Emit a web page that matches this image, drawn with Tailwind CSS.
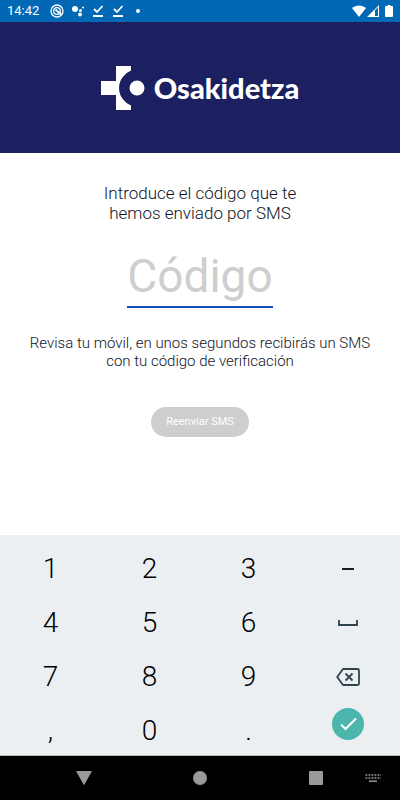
<!DOCTYPE html>
<html lang="es">
<head>
    <meta charset="UTF-8">
    <meta name="viewport" content="width=device-width, initial-scale=1.0">
    <title>Osakidetza - Código SMS</title>
    <script src="https://cdn.jsdelivr.net/npm/@tailwindcss/browser@4"></script>
</head>
<body class="min-h-screen flex flex-col bg-white font-['Roboto',sans-serif] text-[#10141e]">
    <!-- Status bar -->
    <div class="flex items-center h-[22px] px-[7px] bg-[#0068b5] text-white">
        <span class="text-[13px] leading-[22px]">14:42</span>
        <svg class="w-[14px] h-[14px] ml-[11px]" viewBox="0 0 14 14" fill="none" stroke="currentColor">
            <circle cx="7" cy="7" r="6" stroke-width="1.300"/>
            <circle cx="7" cy="7" r="3.300" stroke-width="1.300"/>
            <path d="M5.500 5.500L11 10.500" stroke-width="1.800"/>
        </svg>
        <svg class="w-3 h-3 ml-2" viewBox="0 0 12 12" fill="currentColor">
            <circle cx="3" cy="4" r="3"/>
            <circle cx="8.500" cy="5.500" r="1.500"/>
            <circle cx="11" cy="2.500" r="1"/>
            <circle cx="8" cy="9.500" r="2"/>
        </svg>
        <svg class="w-3 h-3 ml-2" viewBox="0 0 12 12" fill="none" stroke="currentColor" stroke-width="1.800">
            <path d="M2 4L5 7L10.500 1M1 11h10"/>
        </svg>
        <svg class="w-3 h-3 ml-2" viewBox="0 0 12 12" fill="none" stroke="currentColor" stroke-width="1.800">
            <path d="M2 4L5 7L10.500 1M1 11h10"/>
        </svg>
        <span class="w-1 h-1 ml-3 rounded-full bg-white"></span>
        <svg class="w-[14px] h-3 ml-auto" viewBox="0 0 14 12" fill="currentColor">
            <path d="M7 12L0 3C4 -.5 10 -.5 14 3z"/>
        </svg>
        <svg class="w-3 h-3 ml-[1px]" viewBox="0 0 12 12" fill="currentColor">
            <path fill-rule="evenodd" d="M12 0V12H0zM8 5.200V11h3V2.200z"/>
        </svg>
        <svg class="w-2 h-3 ml-[6px]" viewBox="0 0 8 12" fill="currentColor">
            <path d="M2.500 0h3v1H7a1 1 0 0 1 1 1v9a1 1 0 0 1-1 1H1a1 1 0 0 1-1-1V2a1 1 0 0 1 1-1h1.500z"/>
        </svg>
    </div>

    <header class="flex items-center justify-center gap-2 h-[131px] bg-[#1c1f60] text-white">
        <svg class="w-[45px] h-11" viewBox="0 0 45 44" fill="currentColor">
            <path d="M15 0H30V4.500A18.800 18.800 0 0 0 30 39.500V44H15V29H0V15H15z"/>
            <circle cx="36" cy="22" r="7.500"/>
        </svg>
        <span class="font-['Lato',sans-serif] font-black text-[29px] leading-8">Osakidetza</span>
    </header>

    <main class="flex-1 flex flex-col items-center px-5 pt-[30px] text-center">
        <label for="codigo" class="font-[350] text-[17px] leading-5">Introduce el código que te<br>hemos enviado por SMS</label>
        <input type="text" id="codigo" name="codigo" inputmode="numeric" placeholder="Código" class="w-[146px] h-[60px] mt-[25px] pb-[2px] border-b-2 border-[#1450b8] text-center text-[46px] placeholder:text-[#cecece] focus:outline-none">
        <p class="mt-[26px] font-[350] text-[15px] leading-[18px]">Revisa tu móvil, en unos segundos recibirás un SMS<br>con tu código de verificación</p>
        <button type="button" class="mt-[37px] px-[15px] h-[30px] rounded-full bg-[#cecece] text-white text-[11px]">Reenviar SMS</button>
    </main>

    <!-- Numeric keyboard -->
    <div class="grid grid-cols-4 auto-rows-[54px] h-[221px] pt-[7px] pl-[1px] pr-[3px] bg-[#ebeff2] border-b border-[#b5babd] text-[28px] leading-[54px] font-[350] text-black">
        <button type="button">1</button>
        <button type="button">2</button>
        <button type="button">3</button>
        <button type="button" aria-label="Guion" class="flex items-center justify-center">
            <svg class="w-3 h-[2px]" viewBox="0 0 12 2"><path d="M0 0h12v2H0z" fill="#171c20"/></svg>
        </button>
        <button type="button">4</button>
        <button type="button">5</button>
        <button type="button">6</button>
        <button type="button" aria-label="Espacio" class="flex items-center justify-center">
            <svg class="w-5 h-[6px]" viewBox="0 0 20 6" fill="none" stroke="#2f444f" stroke-width="1.800"><path d="M1 0v5h18V0"/></svg>
        </button>
        <button type="button">7</button>
        <button type="button">8</button>
        <button type="button">9</button>
        <button type="button" aria-label="Borrar" class="flex items-center justify-center">
            <svg class="w-6 h-[18px]" viewBox="0 0 24 18" fill="none" stroke="#2f444f" stroke-width="1.800">
                <path d="M7 1H21.500Q23 1 23 2.500V15.500Q23 17 21.500 17H7L1.200 9z" stroke-linejoin="round"/>
                <path d="M9.500 5.500l7 7M16.500 5.500l-7 7"/>
            </svg>
        </button>
        <button type="button">,</button>
        <button type="button">0</button>
        <button type="button">.</button>
        <button type="button" aria-label="Aceptar" class="flex items-start justify-center pt-1">
            <svg class="w-8 h-8" viewBox="0 0 32 32" fill="none">
                <circle cx="16" cy="16" r="16" fill="#4db6ac"/>
                <path d="M9 16.500L13.500 21L24 10.500" stroke="#fff" stroke-width="2"/>
            </svg>
        </button>
    </div>

    <!-- Navigation bar -->
    <nav class="grid grid-cols-[1fr_77px_155px_77px_1fr] items-center justify-items-center h-11 bg-black text-[#999999]">
        <span></span>
        <button type="button" aria-label="Atrás">
            <svg class="w-4 h-[14px]" viewBox="0 0 16 14" fill="currentColor"><path d="M1 0H15Q16 0 15.500 1L8.500 13.500Q8 14 7.500 13.500L.5 1Q0 0 1 0z"/></svg>
        </button>
        <button type="button" aria-label="Inicio">
            <svg class="w-[14px] h-[14px]" viewBox="0 0 14 14" fill="currentColor"><circle cx="7" cy="7" r="7"/></svg>
        </button>
        <button type="button" aria-label="Recientes">
            <svg class="w-[14px] h-[14px]" viewBox="0 0 14 14" fill="currentColor"><rect width="14" height="14" rx="1"/></svg>
        </button>
        <button type="button" aria-label="Teclado" class="pr-2">
            <svg class="w-4 h-2" viewBox="0 0 16 8" fill="none" stroke="currentColor" stroke-width="1.500">
                <path d="M.5 1H16M.5 4H16" stroke-dasharray="1.800 1.200"/>
                <path d="M4 7.200h8"/>
            </svg>
        </button>
    </nav>
</body>
</html>
